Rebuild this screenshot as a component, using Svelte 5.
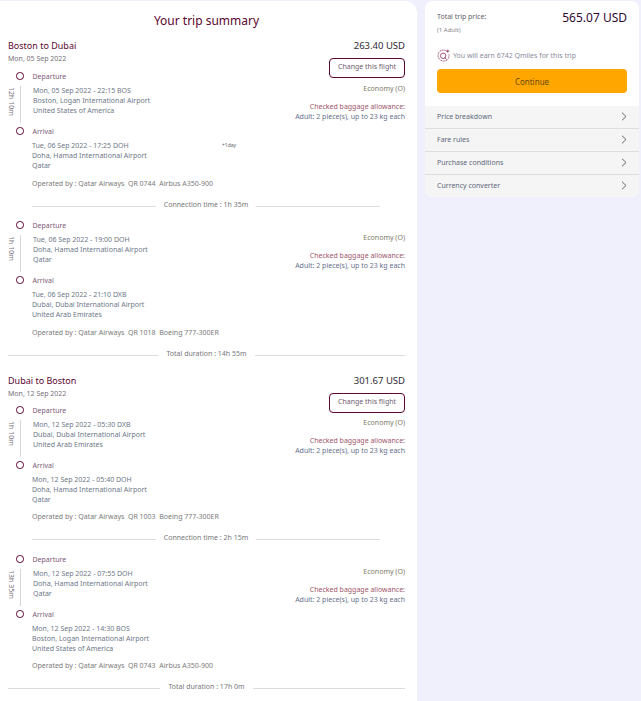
<script>
  const legs = [
    {
      title: 'Boston to Dubai', date: 'Mon, 05 Sep 2022', price: '263.40 USD', total: '14h 55m',
      segments: [
        { duration: '12h 10m', dep: ['Mon, 05 Sep 2022 - 22:15 BOS', 'Boston, Logan International Airport', 'United States of America'],
          arr: ['Tue, 06 Sep 2022 - 17:25 DOH', 'Doha, Hamad International Airport', 'Qatar'], plus: '+1day',
          op: 'Operated by : Qatar Airways  QR 0744  Airbus A350-900', connection: '1h 35m' },
        { duration: '1h 10m', dep: ['Tue, 06 Sep 2022 - 19:00 DOH', 'Doha, Hamad International Airport', 'Qatar'],
          arr: ['Tue, 06 Sep 2022 - 21:10 DXB', 'Dubai, Dubai International Airport', 'United Arab Emirates'],
          op: 'Operated by : Qatar Airways  QR 1018  Boeing 777-300ER' }
      ]
    },
    {
      title: 'Dubai to Boston', date: 'Mon, 12 Sep 2022', price: '301.67 USD', total: '17h 0m',
      segments: [
        { duration: '1h 10m', dep: ['Mon, 12 Sep 2022 - 05:30 DXB', 'Dubai, Dubai International Airport', 'United Arab Emirates'],
          arr: ['Mon, 12 Sep 2022 - 05:40 DOH', 'Doha, Hamad International Airport', 'Qatar'],
          op: 'Operated by : Qatar Airways  QR 1003  Boeing 777-300ER', connection: '2h 15m' },
        { duration: '13h 35m', dep: ['Mon, 12 Sep 2022 - 07:55 DOH', 'Doha, Hamad International Airport', 'Qatar'],
          arr: ['Mon, 12 Sep 2022 - 14:30 BOS', 'Boston, Logan International Airport', 'United States of America'],
          op: 'Operated by : Qatar Airways  QR 0743  Airbus A350-900' }
      ]
    }
  ];
  const links = ['Price breakdown', 'Fare rules', 'Purchase conditions', 'Currency converter'];
</script>

<div class="page">
  <main class="summary">
    <h1>Your trip summary</h1>
    {#each legs as leg, l}
      <section class="leg" class:second={l === 1}>
        <div class="leg-head">
          <div>
            <h2>{leg.title}</h2>
            <p class="date">{leg.date}</p>
          </div>
          <div class="price">{leg.price}</div>
        </div>
        {#each leg.segments as seg, s}
          <div class="segment" class:first={s === 0}>
            <div class="stops">
              <div class="stop-label"><span class="dot"></span>Departure</div>
              <div class="flight">
                <span class="duration">{seg.duration}</span>
                <div class="lines">
                  {#each seg.dep as line}<div>{line}</div>{/each}
                </div>
              </div>
              <div class="stop-label"><span class="dot"></span>Arrival</div>
              <div class="arrival lines">
                {#each seg.arr as line}<div>{line}</div>{/each}
                {#if seg.plus}<span class="plus">{seg.plus}</span>{/if}
              </div>
              <div class="operated">{seg.op}</div>
            </div>
            <div class="right">
              {#if s === 0}<button class="change">Change this flight</button>{/if}
              <div class="cabin">Economy (O)</div>
              <div class="bag"><b>Checked baggage allowance:</b><br /><span>Adult: 2 piece(s), up to 23 kg each</span></div>
            </div>
          </div>
          {#if seg.connection}
            <div class="rule inner"><span>Connection time : {seg.connection}</span></div>
          {/if}
        {/each}
        <div class="rule"><span>Total duration : {leg.total}</span></div>
      </section>
    {/each}
  </main>

  <aside class="side">
    <div class="side-top">
      <div class="total">
        <div>
          <div class="total-label">Total trip price:</div>
          <div class="adults">(1 Adult)</div>
        </div>
        <div class="total-price">565.07 USD</div>
      </div>
      <div class="miles">
        <svg width="13" height="13" viewBox="0 0 13 13" fill="none" stroke="#8a2a55" stroke-width="0.8">
          <path d="M10.6 2.8a5.5 5.5 0 1 0 1.3 2.4" stroke-dasharray="1.2 0.5" />
          <circle cx="6.2" cy="6.8" r="2.7" />
          <path d="M7.6 8.4l1.8 2M10.8 0.6v3M9.3 2.1h3" />
        </svg>
        You will earn 6742 Qmiles for this trip
      </div>
      <button class="continue">Continue</button>
    </div>
    <div class="links">
      {#each links as link}
        <div class="link">
          <span>{link}</span>
          <svg width="6" height="9" viewBox="0 0 6 9" fill="none" stroke="#666" stroke-width="1"><path d="M1 .7l4 3.8-4 3.8" /></svg>
        </div>
      {/each}
    </div>
  </aside>
</div>

<style>
  :global(body) {
    margin: 0;
    background: #eff0fb;
  }

  .page {
    display: flex;
    align-items: flex-start;
    gap: 8px;
    height: 701px;
    overflow: hidden;
    padding-top: 1px;
    box-sizing: border-box;
    font-family: "Noto Sans", "Open Sans", sans-serif;
    font-size: 7px;
    color: #6b6b78;
  }

  .summary {
    width: 417px;
    flex: none;
    height: 720px;
    background: #fff;
    border-radius: 0 12px 0 0;
    padding: 0 12px 0 8px;
    box-sizing: border-box;
  }

  h1 {
    margin: 0;
    padding-top: 10px;
    font-size: 12px;
    line-height: 19px;
    font-weight: 400;
    text-align: center;
    color: #5c0632;
  }

  .leg {
    margin-top: 9px;
  }

  .leg.second {
    margin-top: 15px;
  }

  .leg-head {
    display: flex;
    justify-content: space-between;
    align-items: flex-start;
  }

  h2 {
    margin: 0;
    font-size: 9px;
    line-height: 14px;
    font-weight: 400;
    color: #5c0632;
  }

  .date {
    margin: 0;
    line-height: 11px;
    color: #77707a;
  }

  .price {
    font-size: 9.5px;
    line-height: 14px;
    color: #2e2a33;
  }

  .segment {
    display: flex;
    justify-content: space-between;
    margin-top: 9px;
  }

  .segment.first {
    margin-top: 6px;
  }

  .second .segment {
    margin-top: 10px;
  }

  .second .segment.first {
    margin-top: 5px;
  }

  .stop-label {
    display: flex;
    align-items: center;
    height: 12px;
    color: #7c5a78;
  }

  .dot {
    width: 5.5px;
    height: 5.5px;
    border: 1.5px solid #5c0632;
    border-radius: 50%;
    margin: 0 9px 0 8px;
    flex: none;
  }

  .flight {
    position: relative;
    height: 39px;
    margin-top: 4px;
    padding-left: 25px;
  }

  .flight::before {
    content: "";
    position: absolute;
    left: 12px;
    top: 0;
    bottom: 2px;
    width: 1px;
    background: #d8d8d8;
  }

  .duration {
    position: absolute;
    left: -2px;
    top: 1px;
    writing-mode: vertical-rl;
    line-height: 10px;
    color: #77707a;
  }

  .lines {
    line-height: 10px;
    color: #6e7888;
  }

  .arrival {
    position: relative;
    padding-left: 24px;
    margin-top: 4px;
  }

  .plus {
    position: absolute;
    left: 214px;
    top: -1px;
    font-size: 5px;
    line-height: 10px;
    color: #666;
  }

  .operated {
    margin-top: 8px;
    padding-left: 24px;
    line-height: 10px;
    white-space: pre;
    color: #7b7a78;
  }

  .second .operated {
    margin-top: 7px;
  }

  .right {
    display: flex;
    flex-direction: column;
    align-items: flex-end;
    text-align: right;
    line-height: 10px;
  }

  .change {
    width: 76px;
    height: 20px;
    padding: 0 0 2px;
    margin-top: -12px;
    margin-bottom: 6px;
    background: #fff;
    border: 1px solid #5c0632;
    border-radius: 4px;
    font: inherit;
    color: #6f5d70;
  }

  .second .change {
    margin-top: -11px;
    margin-bottom: 5px;
  }

  .cabin {
    margin-top: 14px;
    color: #7b7a68;
  }

  .change + .cabin {
    margin-top: 0;
  }

  .bag {
    margin-top: 8px;
  }

  .bag b {
    font-weight: 400;
    color: #a0566a;
  }

  .bag span {
    color: #66708a;
  }

  .rule {
    display: flex;
    align-items: center;
    gap: 8px;
    height: 10px;
    margin-top: 11px;
    line-height: 10px;
    color: #77777c;
  }

  .rule::before,
  .rule::after {
    content: "";
    flex: 1;
    height: 1px;
    margin-top: 2px;
    background: #dcdcdc;
  }

  .rule.inner {
    margin: 11px 25px 0 24px;
  }

  .side {
    width: 214px;
    flex: none;
    border-radius: 8px;
    overflow: hidden;
    background: #fff;
  }

  .side-top {
    padding: 10px 12px 13px;
  }

  .total {
    display: flex;
    justify-content: space-between;
    align-items: flex-start;
  }

  .total-label {
    line-height: 12px;
    color: #5f6068;
  }

  .adults {
    font-size: 6px;
    line-height: 12px;
    margin-top: 1px;
    color: #85858a;
  }

  .total-price {
    font-size: 12px;
    line-height: 14px;
    color: #2f0a30;
  }

  .miles {
    display: flex;
    align-items: center;
    gap: 3px;
    margin-top: 12px;
    height: 14px;
    color: #8a8c9c;
  }

  .continue {
    display: block;
    width: 100%;
    height: 24px;
    margin-top: 7px;
    padding: 0;
    background: #ffa600;
    border: none;
    border-radius: 4px;
    font: inherit;
    font-size: 8px;
    color: #6a4a10;
  }

  .link {
    display: flex;
    justify-content: space-between;
    align-items: center;
    height: 21px;
    padding: 0 12px 1px;
    background: #f5f5f6;
    border-bottom: 1px solid #dedee0;
    color: #606878;
  }

  .link:last-child {
    border-bottom: none;
  }
</style>
